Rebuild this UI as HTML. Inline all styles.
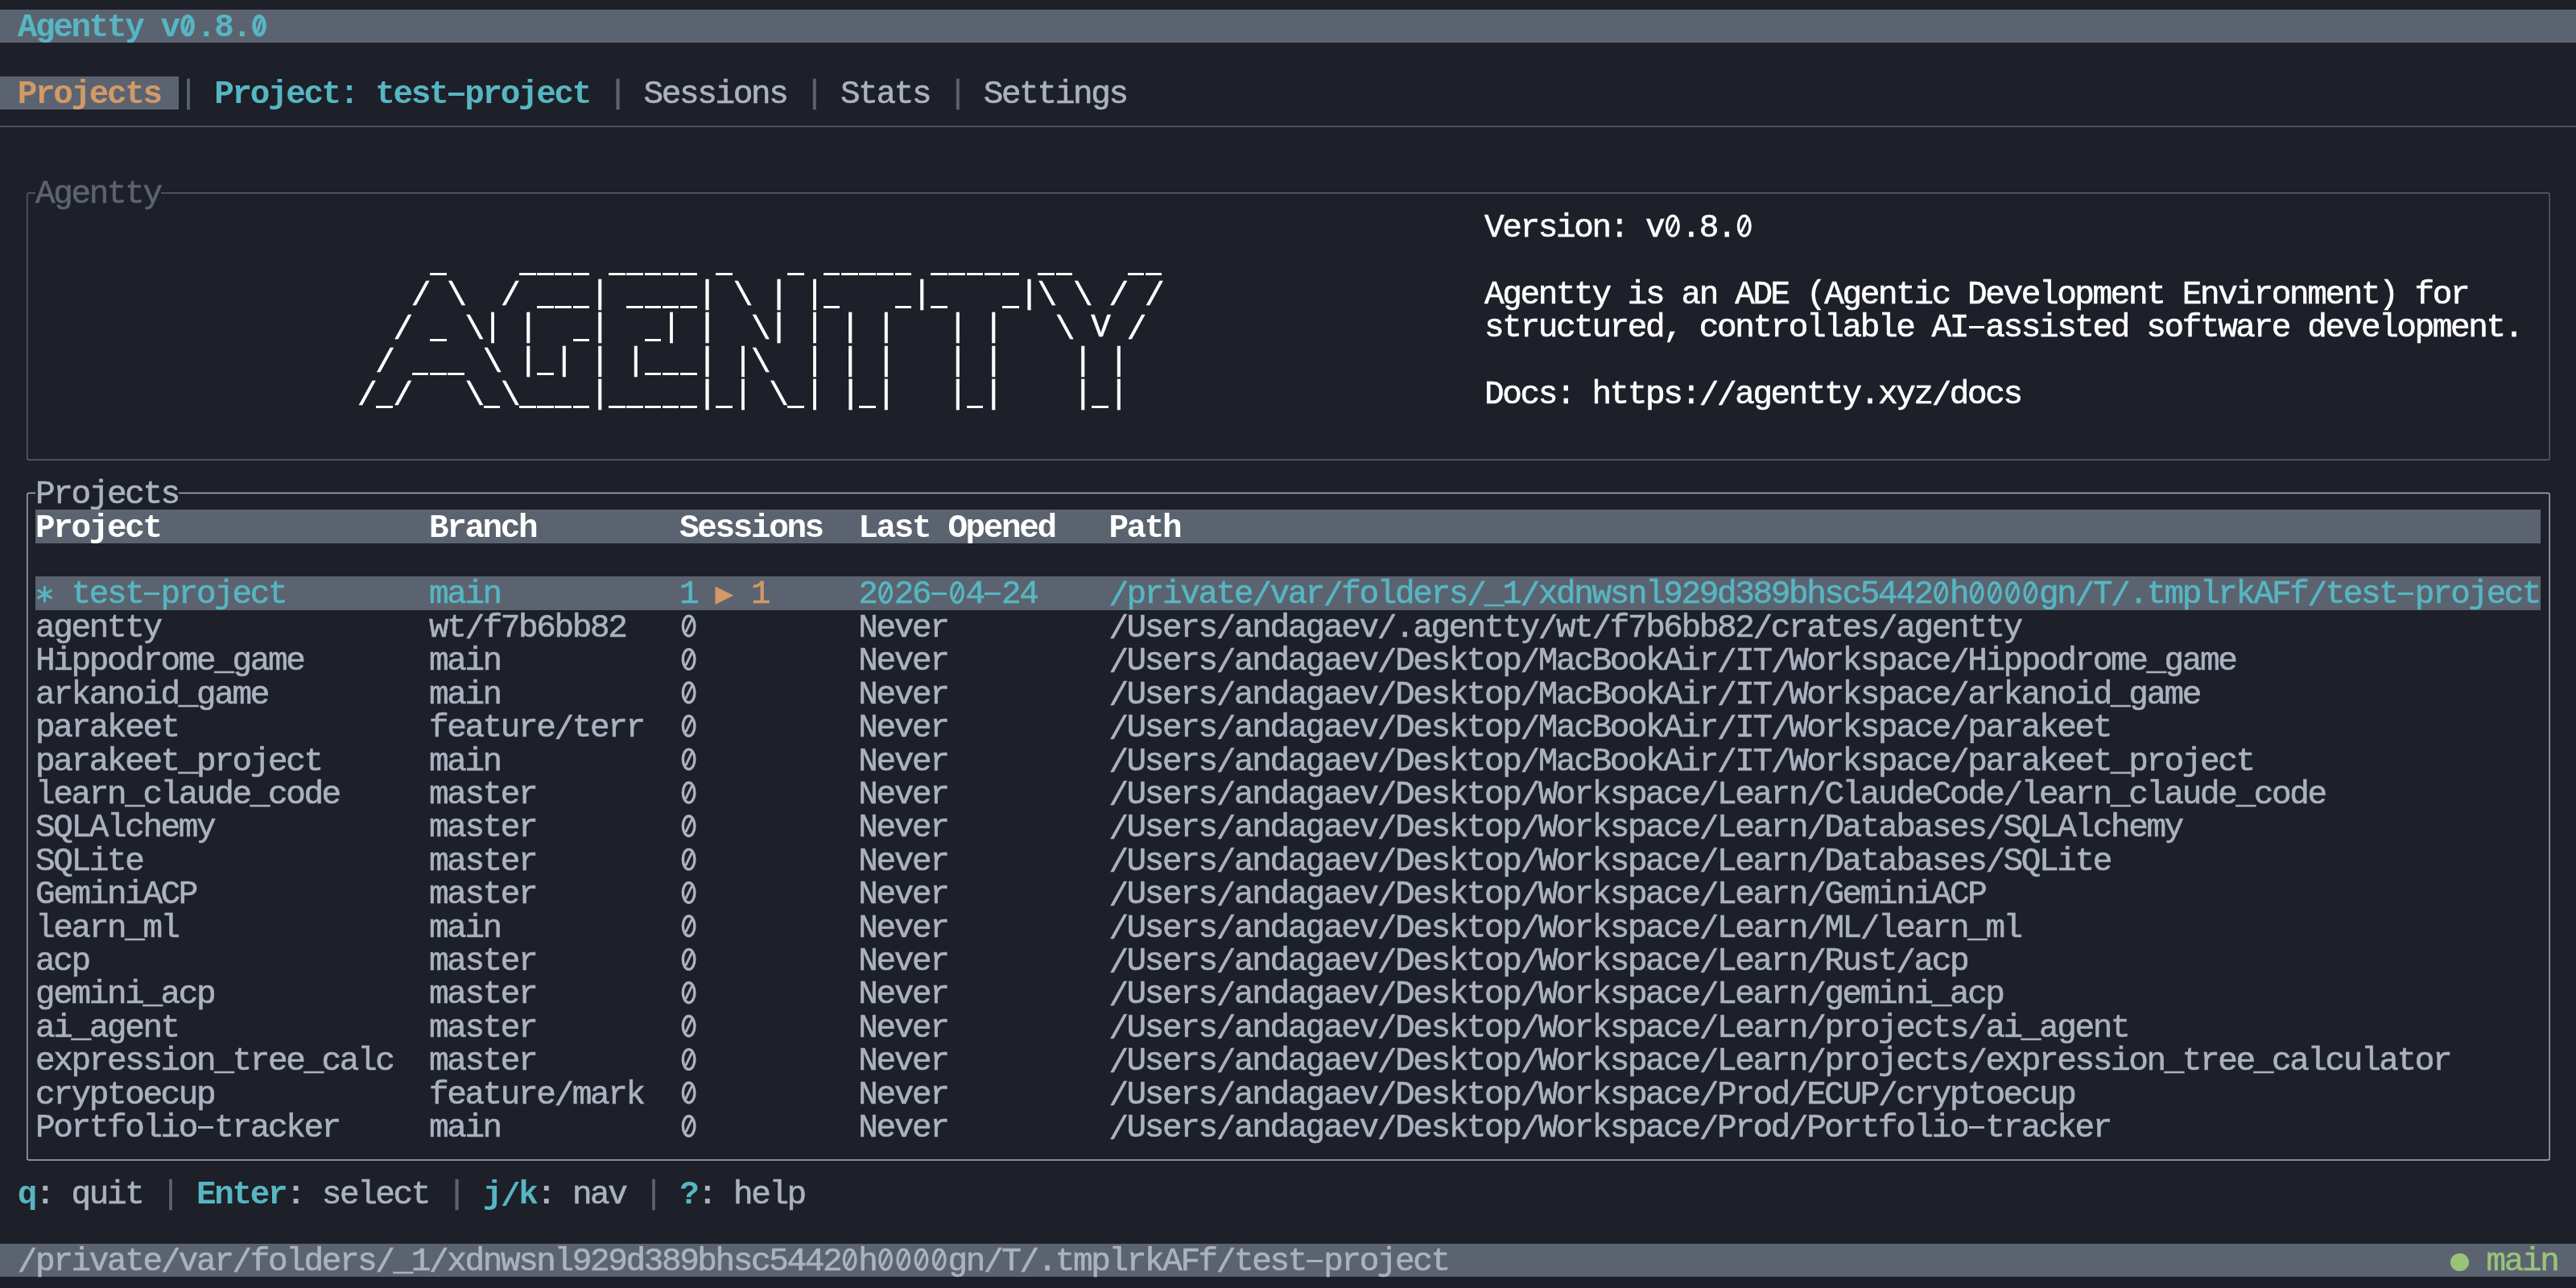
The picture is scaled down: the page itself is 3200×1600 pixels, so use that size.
<!DOCTYPE html>
<html><head><meta charset="utf-8"><style>
html,body{margin:0;padding:0;}
body{width:3200px;height:1600px;background:#1d2029;position:relative;overflow:hidden;will-change:transform;}
.b{position:absolute;}
.r{position:absolute;white-space:pre;-webkit-text-stroke:0.6px currentColor;font-family:"Liberation Mono",monospace;font-size:41.0px;line-height:41.42px;height:41.42px;letter-spacing:-2.382px;}
.B{font-weight:bold;-webkit-text-stroke:0;}
.S{position:relative;top:2.5px;}
</style></head><body>
<div class="b" style="left:0.00px;top:12.00px;width:3200.00px;height:41.42px;background:#5c6370"></div>
<div class="r" style="left:21.83px;top:14.30px"><span class="B" style="color:#56b6c2">Agentty v .8. </span></div>
<svg class="b" style="left:0;top:0" width="3200" height="1600"><g stroke="#56b6c2" fill="none"><ellipse cx="233.12" cy="31.75" rx="6.4" ry="11.45" stroke-width="4.8"/><line x1="230.82" y1="39.60" x2="235.22" y2="24.80" stroke-width="3.6"/></g></svg>
<svg class="b" style="left:0;top:0" width="3200" height="1600"><g stroke="#56b6c2" fill="none"><ellipse cx="322.01" cy="31.75" rx="6.4" ry="11.45" stroke-width="4.8"/><line x1="319.71" y1="39.60" x2="324.11" y2="24.80" stroke-width="3.6"/></g></svg>
<div class="b" style="left:0.00px;top:94.84px;width:222.22px;height:41.42px;background:#5c6370"></div>
<div class="r" style="left:21.83px;top:97.14px"><span class="B" style="color:#d19a66">Projects</span></div>
<div class="r" style="left:221.83px;top:97.14px"><span style="color:#5c6370">|</span></div>
<div class="r" style="left:266.28px;top:97.14px"><span class="B" style="color:#56b6c2">Project: test project</span></div>
<div class="b" style="left:556.66px;top:115.44px;width:20px;height:4px;background:#56b6c2"></div>
<div class="r" style="left:755.16px;top:97.14px"><span style="color:#5c6370">|</span></div>
<div class="r" style="left:799.61px;top:97.14px"><span style="color:#abb2bf">Sessions</span></div>
<div class="r" style="left:999.61px;top:97.14px"><span style="color:#5c6370">|</span></div>
<div class="r" style="left:1044.05px;top:97.14px"><span style="color:#abb2bf">Stats</span></div>
<div class="r" style="left:1177.39px;top:97.14px"><span style="color:#5c6370">|</span></div>
<div class="r" style="left:1221.83px;top:97.14px"><span style="color:#abb2bf">Settings</span></div>
<svg class="b" style="left:0;top:0" width="3200" height="1600" viewBox="0 0 3200 1600"><line x1="0.00" y1="157.00" x2="3200.00" y2="157.00" stroke="#5c6370" stroke-width="1.6"/></svg>
<svg class="b" style="left:0;top:0" width="3200" height="1600" viewBox="0 0 3200 1600"><rect x="33.85" y="239.80" width="3133.30" height="331.50" rx="2" ry="2" fill="none" stroke="#5c6370" stroke-width="1.4"/></svg>
<div class="b" style="left:44.44px;top:219.10px;width:155.56px;height:41.42px;background:#1d2029"></div>
<div class="r" style="left:44.05px;top:221.40px"><span style="color:#5c6370">Agentty</span></div>
<div class="r" style="left:444.05px;top:304.24px"><span style="color:#ffffff">                                             </span></div>
<div class="b" style="left:533.93px;top:338.54px;width:20.62px;height:3.00px;background:#ffffff"></div>
<div class="b" style="left:645.04px;top:338.54px;width:20.62px;height:3.00px;background:#ffffff"></div>
<div class="b" style="left:667.27px;top:338.54px;width:20.62px;height:3.00px;background:#ffffff"></div>
<div class="b" style="left:689.49px;top:338.54px;width:20.62px;height:3.00px;background:#ffffff"></div>
<div class="b" style="left:711.71px;top:338.54px;width:20.62px;height:3.00px;background:#ffffff"></div>
<div class="b" style="left:756.16px;top:338.54px;width:20.62px;height:3.00px;background:#ffffff"></div>
<div class="b" style="left:778.38px;top:338.54px;width:20.62px;height:3.00px;background:#ffffff"></div>
<div class="b" style="left:800.60px;top:338.54px;width:20.62px;height:3.00px;background:#ffffff"></div>
<div class="b" style="left:822.82px;top:338.54px;width:20.62px;height:3.00px;background:#ffffff"></div>
<div class="b" style="left:845.04px;top:338.54px;width:20.62px;height:3.00px;background:#ffffff"></div>
<div class="b" style="left:889.49px;top:338.54px;width:20.62px;height:3.00px;background:#ffffff"></div>
<div class="b" style="left:978.38px;top:338.54px;width:20.62px;height:3.00px;background:#ffffff"></div>
<div class="b" style="left:1022.82px;top:338.54px;width:20.62px;height:3.00px;background:#ffffff"></div>
<div class="b" style="left:1045.04px;top:338.54px;width:20.62px;height:3.00px;background:#ffffff"></div>
<div class="b" style="left:1067.27px;top:338.54px;width:20.62px;height:3.00px;background:#ffffff"></div>
<div class="b" style="left:1089.49px;top:338.54px;width:20.62px;height:3.00px;background:#ffffff"></div>
<div class="b" style="left:1111.71px;top:338.54px;width:20.62px;height:3.00px;background:#ffffff"></div>
<div class="b" style="left:1156.16px;top:338.54px;width:20.62px;height:3.00px;background:#ffffff"></div>
<div class="b" style="left:1178.38px;top:338.54px;width:20.62px;height:3.00px;background:#ffffff"></div>
<div class="b" style="left:1200.60px;top:338.54px;width:20.62px;height:3.00px;background:#ffffff"></div>
<div class="b" style="left:1222.82px;top:338.54px;width:20.62px;height:3.00px;background:#ffffff"></div>
<div class="b" style="left:1245.04px;top:338.54px;width:20.62px;height:3.00px;background:#ffffff"></div>
<div class="b" style="left:1289.49px;top:338.54px;width:20.62px;height:3.00px;background:#ffffff"></div>
<div class="b" style="left:1311.71px;top:338.54px;width:20.62px;height:3.00px;background:#ffffff"></div>
<div class="b" style="left:1400.60px;top:338.54px;width:20.62px;height:3.00px;background:#ffffff"></div>
<div class="b" style="left:1422.82px;top:338.54px;width:20.62px;height:3.00px;background:#ffffff"></div>
<div class="r" style="left:444.05px;top:345.66px"><span style="color:#ffffff">   </span><span class="S" style="color:#ffffff">/</span><span style="color:#ffffff"> </span><span class="S" style="color:#ffffff">\</span><span style="color:#ffffff">  </span><span class="S" style="color:#ffffff">/</span><span style="color:#ffffff">    |     | </span><span class="S" style="color:#ffffff">\</span><span style="color:#ffffff"> | |     |     |</span><span class="S" style="color:#ffffff">\</span><span style="color:#ffffff"> </span><span class="S" style="color:#ffffff">\</span><span style="color:#ffffff"> </span><span class="S" style="color:#ffffff">/</span><span style="color:#ffffff"> </span><span class="S" style="color:#ffffff">/</span></div>
<div class="b" style="left:667.27px;top:379.96px;width:20.62px;height:3.00px;background:#ffffff"></div>
<div class="b" style="left:689.49px;top:379.96px;width:20.62px;height:3.00px;background:#ffffff"></div>
<div class="b" style="left:711.71px;top:379.96px;width:20.62px;height:3.00px;background:#ffffff"></div>
<div class="b" style="left:778.38px;top:379.96px;width:20.62px;height:3.00px;background:#ffffff"></div>
<div class="b" style="left:800.60px;top:379.96px;width:20.62px;height:3.00px;background:#ffffff"></div>
<div class="b" style="left:822.82px;top:379.96px;width:20.62px;height:3.00px;background:#ffffff"></div>
<div class="b" style="left:845.04px;top:379.96px;width:20.62px;height:3.00px;background:#ffffff"></div>
<div class="b" style="left:1022.82px;top:379.96px;width:20.62px;height:3.00px;background:#ffffff"></div>
<div class="b" style="left:1111.71px;top:379.96px;width:20.62px;height:3.00px;background:#ffffff"></div>
<div class="b" style="left:1156.16px;top:379.96px;width:20.62px;height:3.00px;background:#ffffff"></div>
<div class="b" style="left:1245.04px;top:379.96px;width:20.62px;height:3.00px;background:#ffffff"></div>
<div class="r" style="left:444.05px;top:387.08px"><span style="color:#ffffff">  </span><span class="S" style="color:#ffffff">/</span><span style="color:#ffffff">   </span><span class="S" style="color:#ffffff">\</span><span style="color:#ffffff">| |   |   | |  </span><span class="S" style="color:#ffffff">\</span><span style="color:#ffffff">| | | |   | |   </span><span class="S" style="color:#ffffff">\</span><span style="color:#ffffff"> V </span><span class="S" style="color:#ffffff">/</span></div>
<div class="b" style="left:533.93px;top:421.38px;width:20.62px;height:3.00px;background:#ffffff"></div>
<div class="b" style="left:711.71px;top:421.38px;width:20.62px;height:3.00px;background:#ffffff"></div>
<div class="b" style="left:800.60px;top:421.38px;width:20.62px;height:3.00px;background:#ffffff"></div>
<div class="r" style="left:444.05px;top:428.50px"><span style="color:#ffffff"> </span><span class="S" style="color:#ffffff">/</span><span style="color:#ffffff">     </span><span class="S" style="color:#ffffff">\</span><span style="color:#ffffff"> | | | |   | |</span><span class="S" style="color:#ffffff">\</span><span style="color:#ffffff">  | | |   | |    | |</span></div>
<div class="b" style="left:511.71px;top:462.80px;width:20.62px;height:3.00px;background:#ffffff"></div>
<div class="b" style="left:533.93px;top:462.80px;width:20.62px;height:3.00px;background:#ffffff"></div>
<div class="b" style="left:556.16px;top:462.80px;width:20.62px;height:3.00px;background:#ffffff"></div>
<div class="b" style="left:667.27px;top:462.80px;width:20.62px;height:3.00px;background:#ffffff"></div>
<div class="b" style="left:800.60px;top:462.80px;width:20.62px;height:3.00px;background:#ffffff"></div>
<div class="b" style="left:822.82px;top:462.80px;width:20.62px;height:3.00px;background:#ffffff"></div>
<div class="b" style="left:845.04px;top:462.80px;width:20.62px;height:3.00px;background:#ffffff"></div>
<div class="r" style="left:444.05px;top:469.92px"><span class="S" style="color:#ffffff">/</span><span style="color:#ffffff"> </span><span class="S" style="color:#ffffff">/</span><span style="color:#ffffff">   </span><span class="S" style="color:#ffffff">\</span><span style="color:#ffffff"> </span><span class="S" style="color:#ffffff">\</span><span style="color:#ffffff">    |     | | </span><span class="S" style="color:#ffffff">\</span><span style="color:#ffffff"> | | |   | |    | |</span></div>
<div class="b" style="left:467.27px;top:504.22px;width:20.62px;height:3.00px;background:#ffffff"></div>
<div class="b" style="left:600.60px;top:504.22px;width:20.62px;height:3.00px;background:#ffffff"></div>
<div class="b" style="left:645.04px;top:504.22px;width:20.62px;height:3.00px;background:#ffffff"></div>
<div class="b" style="left:667.27px;top:504.22px;width:20.62px;height:3.00px;background:#ffffff"></div>
<div class="b" style="left:689.49px;top:504.22px;width:20.62px;height:3.00px;background:#ffffff"></div>
<div class="b" style="left:711.71px;top:504.22px;width:20.62px;height:3.00px;background:#ffffff"></div>
<div class="b" style="left:756.16px;top:504.22px;width:20.62px;height:3.00px;background:#ffffff"></div>
<div class="b" style="left:778.38px;top:504.22px;width:20.62px;height:3.00px;background:#ffffff"></div>
<div class="b" style="left:800.60px;top:504.22px;width:20.62px;height:3.00px;background:#ffffff"></div>
<div class="b" style="left:822.82px;top:504.22px;width:20.62px;height:3.00px;background:#ffffff"></div>
<div class="b" style="left:845.04px;top:504.22px;width:20.62px;height:3.00px;background:#ffffff"></div>
<div class="b" style="left:889.49px;top:504.22px;width:20.62px;height:3.00px;background:#ffffff"></div>
<div class="b" style="left:978.38px;top:504.22px;width:20.62px;height:3.00px;background:#ffffff"></div>
<div class="b" style="left:1067.27px;top:504.22px;width:20.62px;height:3.00px;background:#ffffff"></div>
<div class="b" style="left:1200.60px;top:504.22px;width:20.62px;height:3.00px;background:#ffffff"></div>
<div class="b" style="left:1356.16px;top:504.22px;width:20.62px;height:3.00px;background:#ffffff"></div>
<div class="r" style="left:1844.05px;top:262.82px"><span style="color:#ffffff">Version: v .8. </span></div>
<svg class="b" style="left:0;top:0" width="3200" height="1600"><g stroke="#ffffff" fill="none"><ellipse cx="2077.87" cy="280.52" rx="7.3" ry="12.4" stroke-width="3.4"/><line x1="2073.97" y1="288.32" x2="2081.77" y2="272.02" stroke-width="3"/></g></svg>
<svg class="b" style="left:0;top:0" width="3200" height="1600"><g stroke="#ffffff" fill="none"><ellipse cx="2166.76" cy="280.52" rx="7.3" ry="12.4" stroke-width="3.4"/><line x1="2162.86" y1="288.32" x2="2170.66" y2="272.02" stroke-width="3"/></g></svg>
<div class="r" style="left:1844.05px;top:345.66px"><span style="color:#ffffff">Agentty is an ADE (Agentic Development Environment) for</span></div>
<div class="r" style="left:1844.05px;top:387.08px"><span style="color:#ffffff">structured, controllable AI assisted software development.</span></div>
<div class="b" style="left:2445.64px;top:405.08px;width:19.4px;height:3px;background:#ffffff"></div>
<div class="r" style="left:1844.05px;top:469.92px"><span style="color:#ffffff">Docs: https:</span><span class="S" style="color:#ffffff">//</span><span style="color:#ffffff">agentty.xyz</span><span class="S" style="color:#ffffff">/</span><span style="color:#ffffff">docs</span></div>
<svg class="b" style="left:0;top:0" width="3200" height="1600" viewBox="0 0 3200 1600"><rect x="33.85" y="612.50" width="3133.30" height="828.50" rx="2" ry="2" fill="none" stroke="#abb2bf" stroke-width="1.4"/></svg>
<div class="b" style="left:44.44px;top:591.88px;width:177.78px;height:41.42px;background:#1d2029"></div>
<div class="r" style="left:44.05px;top:594.18px"><span style="color:#abb2bf">Projects</span></div>
<div class="b" style="left:44.44px;top:633.30px;width:3111.11px;height:41.42px;background:#5c6370"></div>
<div class="r" style="left:44.05px;top:635.60px"><span class="B" style="color:#ffffff">Project</span></div>
<div class="r" style="left:532.94px;top:635.60px"><span class="B" style="color:#ffffff">Branch</span></div>
<div class="r" style="left:844.05px;top:635.60px"><span class="B" style="color:#ffffff">Sessions</span></div>
<div class="r" style="left:1066.28px;top:635.60px"><span class="B" style="color:#ffffff">Last Opened</span></div>
<div class="r" style="left:1377.39px;top:635.60px"><span class="B" style="color:#ffffff">Path</span></div>
<div class="b" style="left:44.44px;top:716.14px;width:3111.11px;height:41.42px;background:#5c6370"></div>
<div class="r" style="left:44.05px;top:718.44px"><span style="color:#56b6c2">  test project</span></div>
<svg class="b" style="left:0;top:0" width="3200" height="1600"><g stroke="#56b6c2" stroke-width="3" stroke-linecap="butt"><line x1="55.56" y1="727.84" x2="55.56" y2="748.24"/><line x1="46.72" y1="732.94" x2="64.39" y2="743.14"/><line x1="46.72" y1="743.14" x2="64.39" y2="732.94"/></g></svg>
<div class="b" style="left:178.98px;top:736.44px;width:19.4px;height:3px;background:#56b6c2"></div>
<div class="r" style="left:532.94px;top:718.44px"><span style="color:#56b6c2">main</span></div>
<div class="r" style="left:844.05px;top:718.44px"><span style="color:#56b6c2">1</span></div>
<div class="r" style="left:932.94px;top:718.44px"><span style="color:#d19a66">1</span></div>
<div class="r" style="left:1066.28px;top:718.44px"><span style="color:#56b6c2">2 26  4 24</span></div>
<svg class="b" style="left:0;top:0" width="3200" height="1600"><g stroke="#56b6c2" fill="none"><ellipse cx="1100.09" cy="736.14" rx="7.3" ry="12.4" stroke-width="3.4"/><line x1="1096.19" y1="743.94" x2="1103.99" y2="727.64" stroke-width="3"/></g></svg>
<div class="b" style="left:1156.76px;top:736.44px;width:19.4px;height:3px;background:#56b6c2"></div>
<svg class="b" style="left:0;top:0" width="3200" height="1600"><g stroke="#56b6c2" fill="none"><ellipse cx="1188.98" cy="736.14" rx="7.3" ry="12.4" stroke-width="3.4"/><line x1="1185.08" y1="743.94" x2="1192.88" y2="727.64" stroke-width="3"/></g></svg>
<div class="b" style="left:1223.42px;top:736.44px;width:19.4px;height:3px;background:#56b6c2"></div>
<div class="r" style="left:1377.39px;top:718.44px"><span class="S" style="color:#56b6c2">/</span><span style="color:#56b6c2">private</span><span class="S" style="color:#56b6c2">/</span><span style="color:#56b6c2">var</span><span class="S" style="color:#56b6c2">/</span><span style="color:#56b6c2">folders</span><span class="S" style="color:#56b6c2">/</span><span style="color:#56b6c2">_1</span><span class="S" style="color:#56b6c2">/</span><span style="color:#56b6c2">xdnwsnl929d389bhsc5442 h    gn</span><span class="S" style="color:#56b6c2">/</span><span style="color:#56b6c2">T</span><span class="S" style="color:#56b6c2">/</span><span style="color:#56b6c2">.tmplrkAFf</span><span class="S" style="color:#56b6c2">/</span><span style="color:#56b6c2">test project</span></div>
<svg class="b" style="left:0;top:0" width="3200" height="1600"><g stroke="#56b6c2" fill="none"><ellipse cx="2411.20" cy="736.14" rx="7.3" ry="12.4" stroke-width="3.4"/><line x1="2407.30" y1="743.94" x2="2415.10" y2="727.64" stroke-width="3"/></g></svg>
<svg class="b" style="left:0;top:0" width="3200" height="1600"><g stroke="#56b6c2" fill="none"><ellipse cx="2455.64" cy="736.14" rx="7.3" ry="12.4" stroke-width="3.4"/><line x1="2451.74" y1="743.94" x2="2459.54" y2="727.64" stroke-width="3"/></g></svg>
<svg class="b" style="left:0;top:0" width="3200" height="1600"><g stroke="#56b6c2" fill="none"><ellipse cx="2477.87" cy="736.14" rx="7.3" ry="12.4" stroke-width="3.4"/><line x1="2473.97" y1="743.94" x2="2481.77" y2="727.64" stroke-width="3"/></g></svg>
<svg class="b" style="left:0;top:0" width="3200" height="1600"><g stroke="#56b6c2" fill="none"><ellipse cx="2500.09" cy="736.14" rx="7.3" ry="12.4" stroke-width="3.4"/><line x1="2496.19" y1="743.94" x2="2503.99" y2="727.64" stroke-width="3"/></g></svg>
<svg class="b" style="left:0;top:0" width="3200" height="1600"><g stroke="#56b6c2" fill="none"><ellipse cx="2522.31" cy="736.14" rx="7.3" ry="12.4" stroke-width="3.4"/><line x1="2518.41" y1="743.94" x2="2526.21" y2="727.64" stroke-width="3"/></g></svg>
<div class="b" style="left:2978.98px;top:736.44px;width:19.4px;height:3px;background:#56b6c2"></div>
<svg class="b" style="left:888.89px;top:716.14px;overflow:visible" width="22.22" height="41.42" viewBox="0 0 22.22 41.42"><polygon points="-0.5,12.5 22.3,23.8 -0.5,35" fill="#d19a66"/></svg>
<div class="r" style="left:44.05px;top:759.86px"><span style="color:#abb2bf">agentty</span></div>
<div class="r" style="left:532.94px;top:759.86px"><span style="color:#abb2bf">wt</span><span class="S" style="color:#abb2bf">/</span><span style="color:#abb2bf">f7b6bb82</span></div>
<div class="r" style="left:844.05px;top:759.86px"><span style="color:#abb2bf"> </span></div>
<svg class="b" style="left:0;top:0" width="3200" height="1600"><g stroke="#abb2bf" fill="none"><ellipse cx="855.64" cy="777.56" rx="7.3" ry="12.4" stroke-width="3.4"/><line x1="851.74" y1="785.36" x2="859.54" y2="769.06" stroke-width="3"/></g></svg>
<div class="r" style="left:1066.28px;top:759.86px"><span style="color:#abb2bf">Never</span></div>
<div class="r" style="left:1377.39px;top:759.86px"><span class="S" style="color:#abb2bf">/</span><span style="color:#abb2bf">Users</span><span class="S" style="color:#abb2bf">/</span><span style="color:#abb2bf">andagaev</span><span class="S" style="color:#abb2bf">/</span><span style="color:#abb2bf">.agentty</span><span class="S" style="color:#abb2bf">/</span><span style="color:#abb2bf">wt</span><span class="S" style="color:#abb2bf">/</span><span style="color:#abb2bf">f7b6bb82</span><span class="S" style="color:#abb2bf">/</span><span style="color:#abb2bf">crates</span><span class="S" style="color:#abb2bf">/</span><span style="color:#abb2bf">agentty</span></div>
<div class="r" style="left:44.05px;top:801.28px"><span style="color:#abb2bf">Hippodrome_game</span></div>
<div class="r" style="left:532.94px;top:801.28px"><span style="color:#abb2bf">main</span></div>
<div class="r" style="left:844.05px;top:801.28px"><span style="color:#abb2bf"> </span></div>
<svg class="b" style="left:0;top:0" width="3200" height="1600"><g stroke="#abb2bf" fill="none"><ellipse cx="855.64" cy="818.98" rx="7.3" ry="12.4" stroke-width="3.4"/><line x1="851.74" y1="826.78" x2="859.54" y2="810.48" stroke-width="3"/></g></svg>
<div class="r" style="left:1066.28px;top:801.28px"><span style="color:#abb2bf">Never</span></div>
<div class="r" style="left:1377.39px;top:801.28px"><span class="S" style="color:#abb2bf">/</span><span style="color:#abb2bf">Users</span><span class="S" style="color:#abb2bf">/</span><span style="color:#abb2bf">andagaev</span><span class="S" style="color:#abb2bf">/</span><span style="color:#abb2bf">Desktop</span><span class="S" style="color:#abb2bf">/</span><span style="color:#abb2bf">MacBookAir</span><span class="S" style="color:#abb2bf">/</span><span style="color:#abb2bf">IT</span><span class="S" style="color:#abb2bf">/</span><span style="color:#abb2bf">Workspace</span><span class="S" style="color:#abb2bf">/</span><span style="color:#abb2bf">Hippodrome_game</span></div>
<div class="r" style="left:44.05px;top:842.70px"><span style="color:#abb2bf">arkanoid_game</span></div>
<div class="r" style="left:532.94px;top:842.70px"><span style="color:#abb2bf">main</span></div>
<div class="r" style="left:844.05px;top:842.70px"><span style="color:#abb2bf"> </span></div>
<svg class="b" style="left:0;top:0" width="3200" height="1600"><g stroke="#abb2bf" fill="none"><ellipse cx="855.64" cy="860.40" rx="7.3" ry="12.4" stroke-width="3.4"/><line x1="851.74" y1="868.20" x2="859.54" y2="851.90" stroke-width="3"/></g></svg>
<div class="r" style="left:1066.28px;top:842.70px"><span style="color:#abb2bf">Never</span></div>
<div class="r" style="left:1377.39px;top:842.70px"><span class="S" style="color:#abb2bf">/</span><span style="color:#abb2bf">Users</span><span class="S" style="color:#abb2bf">/</span><span style="color:#abb2bf">andagaev</span><span class="S" style="color:#abb2bf">/</span><span style="color:#abb2bf">Desktop</span><span class="S" style="color:#abb2bf">/</span><span style="color:#abb2bf">MacBookAir</span><span class="S" style="color:#abb2bf">/</span><span style="color:#abb2bf">IT</span><span class="S" style="color:#abb2bf">/</span><span style="color:#abb2bf">Workspace</span><span class="S" style="color:#abb2bf">/</span><span style="color:#abb2bf">arkanoid_game</span></div>
<div class="r" style="left:44.05px;top:884.12px"><span style="color:#abb2bf">parakeet</span></div>
<div class="r" style="left:532.94px;top:884.12px"><span style="color:#abb2bf">feature</span><span class="S" style="color:#abb2bf">/</span><span style="color:#abb2bf">terr</span></div>
<div class="r" style="left:844.05px;top:884.12px"><span style="color:#abb2bf"> </span></div>
<svg class="b" style="left:0;top:0" width="3200" height="1600"><g stroke="#abb2bf" fill="none"><ellipse cx="855.64" cy="901.82" rx="7.3" ry="12.4" stroke-width="3.4"/><line x1="851.74" y1="909.62" x2="859.54" y2="893.32" stroke-width="3"/></g></svg>
<div class="r" style="left:1066.28px;top:884.12px"><span style="color:#abb2bf">Never</span></div>
<div class="r" style="left:1377.39px;top:884.12px"><span class="S" style="color:#abb2bf">/</span><span style="color:#abb2bf">Users</span><span class="S" style="color:#abb2bf">/</span><span style="color:#abb2bf">andagaev</span><span class="S" style="color:#abb2bf">/</span><span style="color:#abb2bf">Desktop</span><span class="S" style="color:#abb2bf">/</span><span style="color:#abb2bf">MacBookAir</span><span class="S" style="color:#abb2bf">/</span><span style="color:#abb2bf">IT</span><span class="S" style="color:#abb2bf">/</span><span style="color:#abb2bf">Workspace</span><span class="S" style="color:#abb2bf">/</span><span style="color:#abb2bf">parakeet</span></div>
<div class="r" style="left:44.05px;top:925.54px"><span style="color:#abb2bf">parakeet_project</span></div>
<div class="r" style="left:532.94px;top:925.54px"><span style="color:#abb2bf">main</span></div>
<div class="r" style="left:844.05px;top:925.54px"><span style="color:#abb2bf"> </span></div>
<svg class="b" style="left:0;top:0" width="3200" height="1600"><g stroke="#abb2bf" fill="none"><ellipse cx="855.64" cy="943.24" rx="7.3" ry="12.4" stroke-width="3.4"/><line x1="851.74" y1="951.04" x2="859.54" y2="934.74" stroke-width="3"/></g></svg>
<div class="r" style="left:1066.28px;top:925.54px"><span style="color:#abb2bf">Never</span></div>
<div class="r" style="left:1377.39px;top:925.54px"><span class="S" style="color:#abb2bf">/</span><span style="color:#abb2bf">Users</span><span class="S" style="color:#abb2bf">/</span><span style="color:#abb2bf">andagaev</span><span class="S" style="color:#abb2bf">/</span><span style="color:#abb2bf">Desktop</span><span class="S" style="color:#abb2bf">/</span><span style="color:#abb2bf">MacBookAir</span><span class="S" style="color:#abb2bf">/</span><span style="color:#abb2bf">IT</span><span class="S" style="color:#abb2bf">/</span><span style="color:#abb2bf">Workspace</span><span class="S" style="color:#abb2bf">/</span><span style="color:#abb2bf">parakeet_project</span></div>
<div class="r" style="left:44.05px;top:966.96px"><span style="color:#abb2bf">learn_claude_code</span></div>
<div class="r" style="left:532.94px;top:966.96px"><span style="color:#abb2bf">master</span></div>
<div class="r" style="left:844.05px;top:966.96px"><span style="color:#abb2bf"> </span></div>
<svg class="b" style="left:0;top:0" width="3200" height="1600"><g stroke="#abb2bf" fill="none"><ellipse cx="855.64" cy="984.66" rx="7.3" ry="12.4" stroke-width="3.4"/><line x1="851.74" y1="992.46" x2="859.54" y2="976.16" stroke-width="3"/></g></svg>
<div class="r" style="left:1066.28px;top:966.96px"><span style="color:#abb2bf">Never</span></div>
<div class="r" style="left:1377.39px;top:966.96px"><span class="S" style="color:#abb2bf">/</span><span style="color:#abb2bf">Users</span><span class="S" style="color:#abb2bf">/</span><span style="color:#abb2bf">andagaev</span><span class="S" style="color:#abb2bf">/</span><span style="color:#abb2bf">Desktop</span><span class="S" style="color:#abb2bf">/</span><span style="color:#abb2bf">Workspace</span><span class="S" style="color:#abb2bf">/</span><span style="color:#abb2bf">Learn</span><span class="S" style="color:#abb2bf">/</span><span style="color:#abb2bf">ClaudeCode</span><span class="S" style="color:#abb2bf">/</span><span style="color:#abb2bf">learn_claude_code</span></div>
<div class="r" style="left:44.05px;top:1008.38px"><span style="color:#abb2bf">SQLAlchemy</span></div>
<div class="r" style="left:532.94px;top:1008.38px"><span style="color:#abb2bf">master</span></div>
<div class="r" style="left:844.05px;top:1008.38px"><span style="color:#abb2bf"> </span></div>
<svg class="b" style="left:0;top:0" width="3200" height="1600"><g stroke="#abb2bf" fill="none"><ellipse cx="855.64" cy="1026.08" rx="7.3" ry="12.4" stroke-width="3.4"/><line x1="851.74" y1="1033.88" x2="859.54" y2="1017.58" stroke-width="3"/></g></svg>
<div class="r" style="left:1066.28px;top:1008.38px"><span style="color:#abb2bf">Never</span></div>
<div class="r" style="left:1377.39px;top:1008.38px"><span class="S" style="color:#abb2bf">/</span><span style="color:#abb2bf">Users</span><span class="S" style="color:#abb2bf">/</span><span style="color:#abb2bf">andagaev</span><span class="S" style="color:#abb2bf">/</span><span style="color:#abb2bf">Desktop</span><span class="S" style="color:#abb2bf">/</span><span style="color:#abb2bf">Workspace</span><span class="S" style="color:#abb2bf">/</span><span style="color:#abb2bf">Learn</span><span class="S" style="color:#abb2bf">/</span><span style="color:#abb2bf">Databases</span><span class="S" style="color:#abb2bf">/</span><span style="color:#abb2bf">SQLAlchemy</span></div>
<div class="r" style="left:44.05px;top:1049.80px"><span style="color:#abb2bf">SQLite</span></div>
<div class="r" style="left:532.94px;top:1049.80px"><span style="color:#abb2bf">master</span></div>
<div class="r" style="left:844.05px;top:1049.80px"><span style="color:#abb2bf"> </span></div>
<svg class="b" style="left:0;top:0" width="3200" height="1600"><g stroke="#abb2bf" fill="none"><ellipse cx="855.64" cy="1067.50" rx="7.3" ry="12.4" stroke-width="3.4"/><line x1="851.74" y1="1075.30" x2="859.54" y2="1059.00" stroke-width="3"/></g></svg>
<div class="r" style="left:1066.28px;top:1049.80px"><span style="color:#abb2bf">Never</span></div>
<div class="r" style="left:1377.39px;top:1049.80px"><span class="S" style="color:#abb2bf">/</span><span style="color:#abb2bf">Users</span><span class="S" style="color:#abb2bf">/</span><span style="color:#abb2bf">andagaev</span><span class="S" style="color:#abb2bf">/</span><span style="color:#abb2bf">Desktop</span><span class="S" style="color:#abb2bf">/</span><span style="color:#abb2bf">Workspace</span><span class="S" style="color:#abb2bf">/</span><span style="color:#abb2bf">Learn</span><span class="S" style="color:#abb2bf">/</span><span style="color:#abb2bf">Databases</span><span class="S" style="color:#abb2bf">/</span><span style="color:#abb2bf">SQLite</span></div>
<div class="r" style="left:44.05px;top:1091.22px"><span style="color:#abb2bf">GeminiACP</span></div>
<div class="r" style="left:532.94px;top:1091.22px"><span style="color:#abb2bf">master</span></div>
<div class="r" style="left:844.05px;top:1091.22px"><span style="color:#abb2bf"> </span></div>
<svg class="b" style="left:0;top:0" width="3200" height="1600"><g stroke="#abb2bf" fill="none"><ellipse cx="855.64" cy="1108.92" rx="7.3" ry="12.4" stroke-width="3.4"/><line x1="851.74" y1="1116.72" x2="859.54" y2="1100.42" stroke-width="3"/></g></svg>
<div class="r" style="left:1066.28px;top:1091.22px"><span style="color:#abb2bf">Never</span></div>
<div class="r" style="left:1377.39px;top:1091.22px"><span class="S" style="color:#abb2bf">/</span><span style="color:#abb2bf">Users</span><span class="S" style="color:#abb2bf">/</span><span style="color:#abb2bf">andagaev</span><span class="S" style="color:#abb2bf">/</span><span style="color:#abb2bf">Desktop</span><span class="S" style="color:#abb2bf">/</span><span style="color:#abb2bf">Workspace</span><span class="S" style="color:#abb2bf">/</span><span style="color:#abb2bf">Learn</span><span class="S" style="color:#abb2bf">/</span><span style="color:#abb2bf">GeminiACP</span></div>
<div class="r" style="left:44.05px;top:1132.64px"><span style="color:#abb2bf">learn_ml</span></div>
<div class="r" style="left:532.94px;top:1132.64px"><span style="color:#abb2bf">main</span></div>
<div class="r" style="left:844.05px;top:1132.64px"><span style="color:#abb2bf"> </span></div>
<svg class="b" style="left:0;top:0" width="3200" height="1600"><g stroke="#abb2bf" fill="none"><ellipse cx="855.64" cy="1150.34" rx="7.3" ry="12.4" stroke-width="3.4"/><line x1="851.74" y1="1158.14" x2="859.54" y2="1141.84" stroke-width="3"/></g></svg>
<div class="r" style="left:1066.28px;top:1132.64px"><span style="color:#abb2bf">Never</span></div>
<div class="r" style="left:1377.39px;top:1132.64px"><span class="S" style="color:#abb2bf">/</span><span style="color:#abb2bf">Users</span><span class="S" style="color:#abb2bf">/</span><span style="color:#abb2bf">andagaev</span><span class="S" style="color:#abb2bf">/</span><span style="color:#abb2bf">Desktop</span><span class="S" style="color:#abb2bf">/</span><span style="color:#abb2bf">Workspace</span><span class="S" style="color:#abb2bf">/</span><span style="color:#abb2bf">Learn</span><span class="S" style="color:#abb2bf">/</span><span style="color:#abb2bf">ML</span><span class="S" style="color:#abb2bf">/</span><span style="color:#abb2bf">learn_ml</span></div>
<div class="r" style="left:44.05px;top:1174.06px"><span style="color:#abb2bf">acp</span></div>
<div class="r" style="left:532.94px;top:1174.06px"><span style="color:#abb2bf">master</span></div>
<div class="r" style="left:844.05px;top:1174.06px"><span style="color:#abb2bf"> </span></div>
<svg class="b" style="left:0;top:0" width="3200" height="1600"><g stroke="#abb2bf" fill="none"><ellipse cx="855.64" cy="1191.76" rx="7.3" ry="12.4" stroke-width="3.4"/><line x1="851.74" y1="1199.56" x2="859.54" y2="1183.26" stroke-width="3"/></g></svg>
<div class="r" style="left:1066.28px;top:1174.06px"><span style="color:#abb2bf">Never</span></div>
<div class="r" style="left:1377.39px;top:1174.06px"><span class="S" style="color:#abb2bf">/</span><span style="color:#abb2bf">Users</span><span class="S" style="color:#abb2bf">/</span><span style="color:#abb2bf">andagaev</span><span class="S" style="color:#abb2bf">/</span><span style="color:#abb2bf">Desktop</span><span class="S" style="color:#abb2bf">/</span><span style="color:#abb2bf">Workspace</span><span class="S" style="color:#abb2bf">/</span><span style="color:#abb2bf">Learn</span><span class="S" style="color:#abb2bf">/</span><span style="color:#abb2bf">Rust</span><span class="S" style="color:#abb2bf">/</span><span style="color:#abb2bf">acp</span></div>
<div class="r" style="left:44.05px;top:1215.48px"><span style="color:#abb2bf">gemini_acp</span></div>
<div class="r" style="left:532.94px;top:1215.48px"><span style="color:#abb2bf">master</span></div>
<div class="r" style="left:844.05px;top:1215.48px"><span style="color:#abb2bf"> </span></div>
<svg class="b" style="left:0;top:0" width="3200" height="1600"><g stroke="#abb2bf" fill="none"><ellipse cx="855.64" cy="1233.18" rx="7.3" ry="12.4" stroke-width="3.4"/><line x1="851.74" y1="1240.98" x2="859.54" y2="1224.68" stroke-width="3"/></g></svg>
<div class="r" style="left:1066.28px;top:1215.48px"><span style="color:#abb2bf">Never</span></div>
<div class="r" style="left:1377.39px;top:1215.48px"><span class="S" style="color:#abb2bf">/</span><span style="color:#abb2bf">Users</span><span class="S" style="color:#abb2bf">/</span><span style="color:#abb2bf">andagaev</span><span class="S" style="color:#abb2bf">/</span><span style="color:#abb2bf">Desktop</span><span class="S" style="color:#abb2bf">/</span><span style="color:#abb2bf">Workspace</span><span class="S" style="color:#abb2bf">/</span><span style="color:#abb2bf">Learn</span><span class="S" style="color:#abb2bf">/</span><span style="color:#abb2bf">gemini_acp</span></div>
<div class="r" style="left:44.05px;top:1256.90px"><span style="color:#abb2bf">ai_agent</span></div>
<div class="r" style="left:532.94px;top:1256.90px"><span style="color:#abb2bf">master</span></div>
<div class="r" style="left:844.05px;top:1256.90px"><span style="color:#abb2bf"> </span></div>
<svg class="b" style="left:0;top:0" width="3200" height="1600"><g stroke="#abb2bf" fill="none"><ellipse cx="855.64" cy="1274.60" rx="7.3" ry="12.4" stroke-width="3.4"/><line x1="851.74" y1="1282.40" x2="859.54" y2="1266.10" stroke-width="3"/></g></svg>
<div class="r" style="left:1066.28px;top:1256.90px"><span style="color:#abb2bf">Never</span></div>
<div class="r" style="left:1377.39px;top:1256.90px"><span class="S" style="color:#abb2bf">/</span><span style="color:#abb2bf">Users</span><span class="S" style="color:#abb2bf">/</span><span style="color:#abb2bf">andagaev</span><span class="S" style="color:#abb2bf">/</span><span style="color:#abb2bf">Desktop</span><span class="S" style="color:#abb2bf">/</span><span style="color:#abb2bf">Workspace</span><span class="S" style="color:#abb2bf">/</span><span style="color:#abb2bf">Learn</span><span class="S" style="color:#abb2bf">/</span><span style="color:#abb2bf">projects</span><span class="S" style="color:#abb2bf">/</span><span style="color:#abb2bf">ai_agent</span></div>
<div class="r" style="left:44.05px;top:1298.32px"><span style="color:#abb2bf">expression_tree_calc</span></div>
<div class="r" style="left:532.94px;top:1298.32px"><span style="color:#abb2bf">master</span></div>
<div class="r" style="left:844.05px;top:1298.32px"><span style="color:#abb2bf"> </span></div>
<svg class="b" style="left:0;top:0" width="3200" height="1600"><g stroke="#abb2bf" fill="none"><ellipse cx="855.64" cy="1316.02" rx="7.3" ry="12.4" stroke-width="3.4"/><line x1="851.74" y1="1323.82" x2="859.54" y2="1307.52" stroke-width="3"/></g></svg>
<div class="r" style="left:1066.28px;top:1298.32px"><span style="color:#abb2bf">Never</span></div>
<div class="r" style="left:1377.39px;top:1298.32px"><span class="S" style="color:#abb2bf">/</span><span style="color:#abb2bf">Users</span><span class="S" style="color:#abb2bf">/</span><span style="color:#abb2bf">andagaev</span><span class="S" style="color:#abb2bf">/</span><span style="color:#abb2bf">Desktop</span><span class="S" style="color:#abb2bf">/</span><span style="color:#abb2bf">Workspace</span><span class="S" style="color:#abb2bf">/</span><span style="color:#abb2bf">Learn</span><span class="S" style="color:#abb2bf">/</span><span style="color:#abb2bf">projects</span><span class="S" style="color:#abb2bf">/</span><span style="color:#abb2bf">expression_tree_calculator</span></div>
<div class="r" style="left:44.05px;top:1339.74px"><span style="color:#abb2bf">cryptoecup</span></div>
<div class="r" style="left:532.94px;top:1339.74px"><span style="color:#abb2bf">feature</span><span class="S" style="color:#abb2bf">/</span><span style="color:#abb2bf">mark</span></div>
<div class="r" style="left:844.05px;top:1339.74px"><span style="color:#abb2bf"> </span></div>
<svg class="b" style="left:0;top:0" width="3200" height="1600"><g stroke="#abb2bf" fill="none"><ellipse cx="855.64" cy="1357.44" rx="7.3" ry="12.4" stroke-width="3.4"/><line x1="851.74" y1="1365.24" x2="859.54" y2="1348.94" stroke-width="3"/></g></svg>
<div class="r" style="left:1066.28px;top:1339.74px"><span style="color:#abb2bf">Never</span></div>
<div class="r" style="left:1377.39px;top:1339.74px"><span class="S" style="color:#abb2bf">/</span><span style="color:#abb2bf">Users</span><span class="S" style="color:#abb2bf">/</span><span style="color:#abb2bf">andagaev</span><span class="S" style="color:#abb2bf">/</span><span style="color:#abb2bf">Desktop</span><span class="S" style="color:#abb2bf">/</span><span style="color:#abb2bf">Workspace</span><span class="S" style="color:#abb2bf">/</span><span style="color:#abb2bf">Prod</span><span class="S" style="color:#abb2bf">/</span><span style="color:#abb2bf">ECUP</span><span class="S" style="color:#abb2bf">/</span><span style="color:#abb2bf">cryptoecup</span></div>
<div class="r" style="left:44.05px;top:1381.16px"><span style="color:#abb2bf">Portfolio tracker</span></div>
<div class="b" style="left:245.64px;top:1399.16px;width:19.4px;height:3px;background:#abb2bf"></div>
<div class="r" style="left:532.94px;top:1381.16px"><span style="color:#abb2bf">main</span></div>
<div class="r" style="left:844.05px;top:1381.16px"><span style="color:#abb2bf"> </span></div>
<svg class="b" style="left:0;top:0" width="3200" height="1600"><g stroke="#abb2bf" fill="none"><ellipse cx="855.64" cy="1398.86" rx="7.3" ry="12.4" stroke-width="3.4"/><line x1="851.74" y1="1406.66" x2="859.54" y2="1390.36" stroke-width="3"/></g></svg>
<div class="r" style="left:1066.28px;top:1381.16px"><span style="color:#abb2bf">Never</span></div>
<div class="r" style="left:1377.39px;top:1381.16px"><span class="S" style="color:#abb2bf">/</span><span style="color:#abb2bf">Users</span><span class="S" style="color:#abb2bf">/</span><span style="color:#abb2bf">andagaev</span><span class="S" style="color:#abb2bf">/</span><span style="color:#abb2bf">Desktop</span><span class="S" style="color:#abb2bf">/</span><span style="color:#abb2bf">Workspace</span><span class="S" style="color:#abb2bf">/</span><span style="color:#abb2bf">Prod</span><span class="S" style="color:#abb2bf">/</span><span style="color:#abb2bf">Portfolio tracker</span></div>
<div class="b" style="left:2445.64px;top:1399.16px;width:19.4px;height:3px;background:#abb2bf"></div>
<div class="r" style="left:21.83px;top:1464.00px"><span class="B" style="color:#56b6c2">q</span><span class="B" style="color:#abb2bf">:</span><span style="color:#abb2bf"> quit </span><span style="color:#5c6370">|</span><span style="color:#abb2bf"> </span><span class="B" style="color:#56b6c2">Enter</span><span class="B" style="color:#abb2bf">:</span><span style="color:#abb2bf"> select </span><span style="color:#5c6370">|</span><span style="color:#abb2bf"> </span><span class="B" style="color:#56b6c2">j</span><span class="B S" style="color:#56b6c2">/</span><span class="B" style="color:#56b6c2">k</span><span class="B" style="color:#abb2bf">:</span><span style="color:#abb2bf"> nav </span><span style="color:#5c6370">|</span><span style="color:#abb2bf"> </span><span class="B" style="color:#56b6c2">?</span><span class="B" style="color:#abb2bf">:</span><span style="color:#abb2bf"> help</span></div>
<div class="b" style="left:0.00px;top:1544.54px;width:3200.00px;height:41.42px;background:#5c6370"></div>
<div class="r" style="left:21.83px;top:1546.84px"><span class="S" style="color:#abb2bf">/</span><span style="color:#abb2bf">private</span><span class="S" style="color:#abb2bf">/</span><span style="color:#abb2bf">var</span><span class="S" style="color:#abb2bf">/</span><span style="color:#abb2bf">folders</span><span class="S" style="color:#abb2bf">/</span><span style="color:#abb2bf">_1</span><span class="S" style="color:#abb2bf">/</span><span style="color:#abb2bf">xdnwsnl929d389bhsc5442 h    gn</span><span class="S" style="color:#abb2bf">/</span><span style="color:#abb2bf">T</span><span class="S" style="color:#abb2bf">/</span><span style="color:#abb2bf">.tmplrkAFf</span><span class="S" style="color:#abb2bf">/</span><span style="color:#abb2bf">test project</span></div>
<svg class="b" style="left:0;top:0" width="3200" height="1600"><g stroke="#abb2bf" fill="none"><ellipse cx="1055.64" cy="1564.54" rx="7.3" ry="12.4" stroke-width="3.4"/><line x1="1051.74" y1="1572.34" x2="1059.54" y2="1556.04" stroke-width="3"/></g></svg>
<svg class="b" style="left:0;top:0" width="3200" height="1600"><g stroke="#abb2bf" fill="none"><ellipse cx="1100.09" cy="1564.54" rx="7.3" ry="12.4" stroke-width="3.4"/><line x1="1096.19" y1="1572.34" x2="1103.99" y2="1556.04" stroke-width="3"/></g></svg>
<svg class="b" style="left:0;top:0" width="3200" height="1600"><g stroke="#abb2bf" fill="none"><ellipse cx="1122.31" cy="1564.54" rx="7.3" ry="12.4" stroke-width="3.4"/><line x1="1118.41" y1="1572.34" x2="1126.21" y2="1556.04" stroke-width="3"/></g></svg>
<svg class="b" style="left:0;top:0" width="3200" height="1600"><g stroke="#abb2bf" fill="none"><ellipse cx="1144.53" cy="1564.54" rx="7.3" ry="12.4" stroke-width="3.4"/><line x1="1140.63" y1="1572.34" x2="1148.43" y2="1556.04" stroke-width="3"/></g></svg>
<svg class="b" style="left:0;top:0" width="3200" height="1600"><g stroke="#abb2bf" fill="none"><ellipse cx="1166.76" cy="1564.54" rx="7.3" ry="12.4" stroke-width="3.4"/><line x1="1162.86" y1="1572.34" x2="1170.66" y2="1556.04" stroke-width="3"/></g></svg>
<div class="b" style="left:1623.42px;top:1564.84px;width:19.4px;height:3px;background:#abb2bf"></div>
<div class="b" style="left:3044.21px;top:1556.79px;width:22.7px;height:22.7px;border-radius:50%;background:#98c379"></div>
<div class="r" style="left:3088.50px;top:1546.84px"><span style="color:#98c379">main</span></div>
</body></html>
